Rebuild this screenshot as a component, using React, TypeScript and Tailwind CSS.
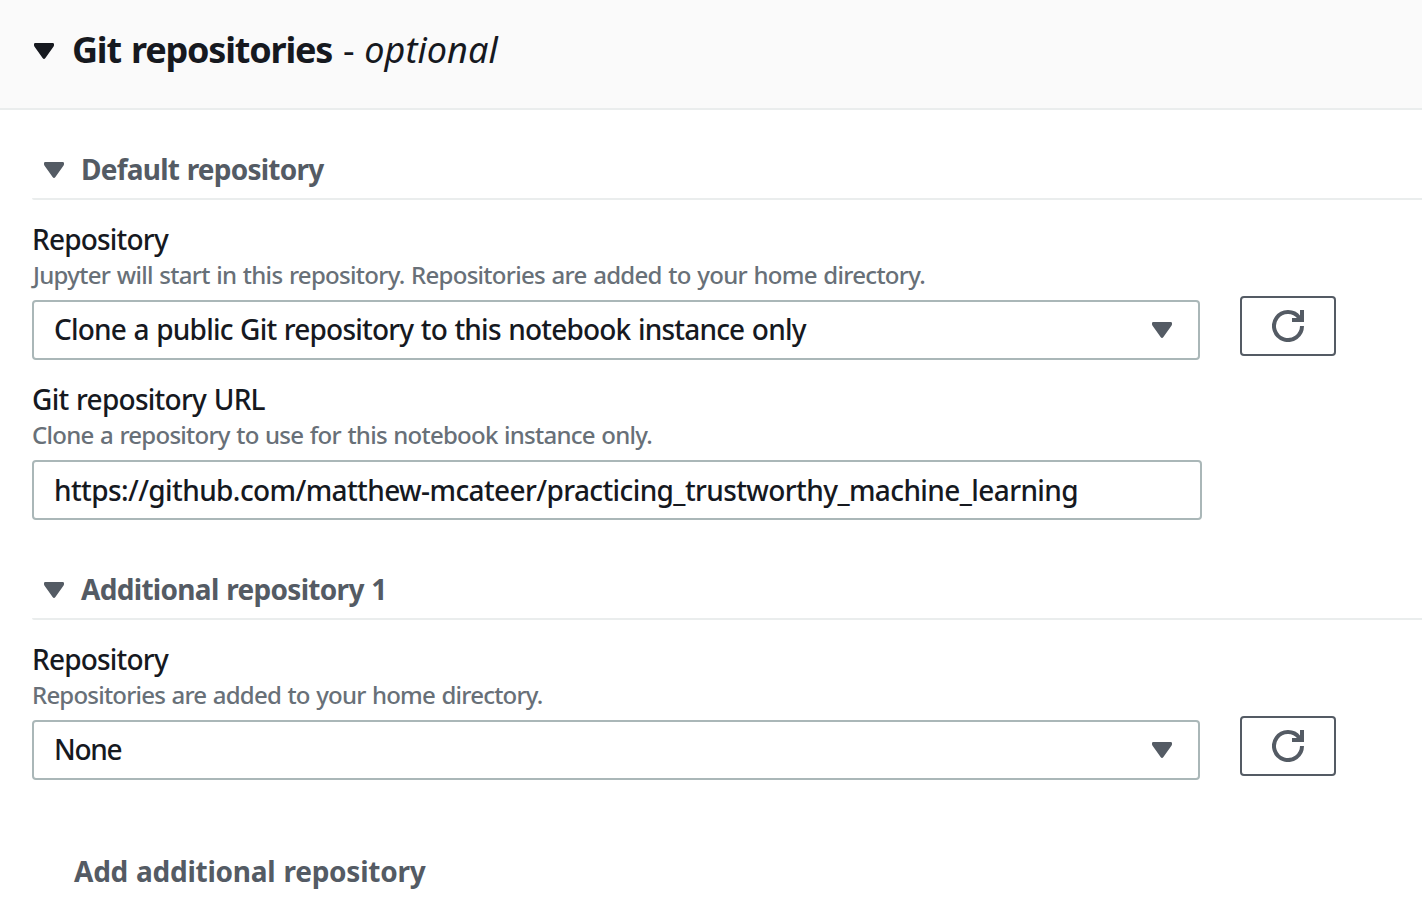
import React from "react";

function Caret({ className = "" }: { className?: string }) {
  return (
    <svg width="20" height="16" viewBox="0 0 20 16" className={"shrink-0 fill-current " + className}>
      <path d="M1.3 0H18.7Q20 0 20 1.3V2.2Q20 2.8 19.6 3.4L11.4 15Q10.7 16 10 16Q9.3 16 8.6 15L0.4 3.4Q0 2.8 0 2.2V1.3Q0 0 1.3 0Z" />
    </svg>
  );
}

function RefreshButton() {
  return (
    <button
      aria-label="Refresh"
      className="-mt-1 ml-10 flex h-15 w-24 items-center justify-center rounded-[4px] border-2 border-[#545b64] bg-white text-[#545b64]"
    >
      <svg width="32" height="32" viewBox="0 0 32 32" fill="none" stroke="currentColor" strokeWidth="4">
        <path d="M30 16A14 14 0 1 1 27.2 7.6L29.5 10" />
        <path d="M30 0V10H20" />
      </svg>
    </button>
  );
}

function SectionTitle({ text, className }: { text: string; className: string }) {
  return (
    <div className="flex h-[51px] items-start rounded-bl-[2px] border-b-2 border-[#eaeded] pl-3 text-[28px] leading-[40px] font-bold text-[#545b64]">
      <Caret className="mt-[13px] mr-[17px]" />
      <h3 className={"whitespace-nowrap [word-spacing:1px] " + className}>{text}</h3>
    </div>
  );
}

type FieldLabelProps = { label: string; hint: string; labelClass: string; hintClass: string };

function FieldLabel({ label, hint, labelClass, hintClass }: FieldLabelProps) {
  return (
    <div className="mb-[7px] pt-[21px] font-medium whitespace-nowrap [word-spacing:1px]">
      <div className={"text-[28px] leading-[36px] " + labelClass}>{label}</div>
      <div className={"text-[24px] leading-[36px] text-[#687078] " + hintClass}>{hint}</div>
    </div>
  );
}

function SelectRow({ value, className }: { value: string; className: string }) {
  return (
    <div className="flex h-15 items-start">
      <div className="flex h-15 w-[1168px] items-center justify-between rounded-[4px] border-2 border-[#aab7b8] bg-white pr-[26px] pl-5">
        <span className={"pb-[2px] text-[28px] leading-[36px] font-medium [word-spacing:1px] " + className}>{value}</span>
        <Caret className="text-[#545b64]" />
      </div>
      <RefreshButton />
    </div>
  );
}

export default function App() {
  return (
    <div className="h-[924px] overflow-hidden bg-white font-['Noto_Sans',sans-serif] text-[#16191f]">
      <header className="flex h-[110px] items-start border-b-2 border-[#eaeded] bg-[#fafafa] pt-[30px] pl-[34px] text-[36px] leading-[40px] whitespace-nowrap">
        <Caret className="mt-[13px] mr-[18px]" />
        <h2 className="font-bold tracking-[-1.2px] [word-spacing:2px]">Git repositories</h2>
        <span className="ml-[11px] tracking-[0.05px]">- <i>optional</i></span>
      </header>
      <main className="pt-[39px] pl-8">
        <SectionTitle text="Default repository" className="tracking-[-0.77px]" />
        <FieldLabel
          label="Repository"
          labelClass="tracking-[-0.8px]"
          hint="Jupyter will start in this repository. Repositories are added to your home directory."
          hintClass="tracking-[-0.71px] pl-px"
        />
        <SelectRow value="Clone a public Git repository to this notebook instance only" className="tracking-[-0.8px]" />
        <FieldLabel
          label="Git repository URL"
          labelClass="tracking-[-0.73px]"
          hint="Clone a repository to use for this notebook instance only."
          hintClass="tracking-[-0.75px]"
        />
        <div className="mb-[49px] flex h-15 w-[1170px] items-center rounded-[4px] border-2 border-[#aab7b8] pl-5 text-[28px] font-medium tracking-[-0.6px]">
          https://github.com/matthew-mcateer/practicing_trustworthy_machine_learning
        </div>
        <SectionTitle text="Additional repository 1" className="tracking-[-0.69px]" />
        <FieldLabel
          label="Repository"
          labelClass="tracking-[-0.8px]"
          hint="Repositories are added to your home directory."
          hintClass="tracking-[-0.79px]"
        />
        <SelectRow value="None" className="tracking-[-1.3px]" />
        <button className="mt-[71px] ml-[42px] block text-[28px] leading-[40px] font-bold tracking-[-0.25px] text-[#545b64] [word-spacing:1px]">
          Add additional repository
        </button>
      </main>
    </div>
  );
}
